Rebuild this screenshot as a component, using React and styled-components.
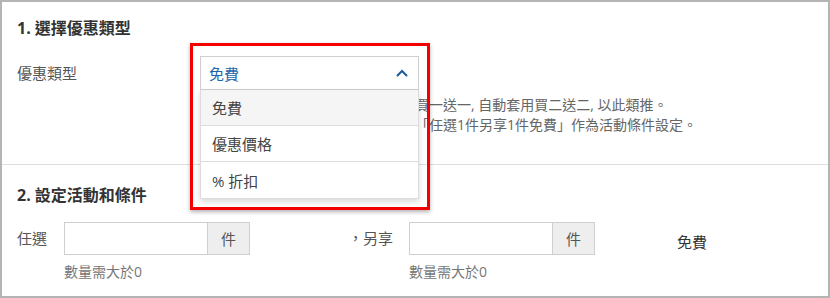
import styled, { createGlobalStyle } from 'styled-components'

const GlobalStyle = createGlobalStyle`
	body {
		margin: 0;
		font-family: "Open Sans", "Noto Sans CJK TC", sans-serif;
		color: #333;
	}
`

const options = ['免費', '優惠價格', '% 折扣']

export default function App() {
	return (
		<>
			<GlobalStyle />
			<Frame>
				<Section divider>
					<SectionTitle>1. 選擇優惠類型</SectionTitle>
					<FieldRow>
						<FieldLabel>優惠類型</FieldLabel>
						<div>
							<SelectWrap>
								<Annotation />
								<SelectBox>
									<SelectValue>免費</SelectValue>
									<Chevron viewBox="0 0 12 8">
										<polyline points="1.5,6.5 6,2 10.5,6.5" />
									</Chevron>
								</SelectBox>
								<OptionList>
									{options.map((opt, i) => (
										<OptionItem key={opt} active={i === 0}>
											{opt}
										</OptionItem>
									))}
								</OptionList>
							</SelectWrap>
							<Hint>
								符合條件即可獲得免費商品，設定買一送一, 自動套用買二送二, 以此類推。
								<br />
								若需設定其他商品組合方式，請以「任選1件另享1件免費」作為活動條件設定。
							</Hint>
						</div>
					</FieldRow>
				</Section>
				<Section>
					<SectionTitle>2. 設定活動和條件</SectionTitle>
					<ConditionRow>
						<RowLabel>任選</RowLabel>
						<div>
							<InputGroup>
								<TextInput />
								<Addon>件</Addon>
							</InputGroup>
							<HelpText>數量需大於0</HelpText>
						</div>
						<RowLabel align="end">，另享</RowLabel>
						<div>
							<InputGroup>
								<TextInput />
								<Addon>件</Addon>
							</InputGroup>
							<HelpText>數量需大於0</HelpText>
						</div>
						<Result>免費</Result>
					</ConditionRow>
				</Section>
			</Frame>
		</>
	)
}

const Frame = styled.div`
	width: 830px;
	height: 298px;
	box-sizing: border-box;
	border: 2px solid #b4b4b4;
	background: #fff;
	overflow: hidden;
`

const Section = styled.section`
	padding: ${({ divider }) => (divider ? '15px 15px 29px' : '19px 15px 0')};
	border-bottom: ${({ divider }) => (divider ? '1px solid #dedede' : 'none')};
`

const SectionTitle = styled.h3`
	margin: 0;
	font-size: 16px;
	line-height: 22px;
	font-weight: 700;
	color: #333;
`

const FieldRow = styled.div`
	display: grid;
	grid-template-columns: 183px 1fr;
	margin-top: 17px;
`

const FieldLabel = styled.div`
	font-size: 15px;
	line-height: 34px;
	color: #555;
`

const SelectWrap = styled.div`
	position: relative;
	width: 219px;
	z-index: 10;
`

const Annotation = styled.div`
	position: absolute;
	top: -13px;
	left: -10px;
	width: 240px;
	height: 167px;
	box-sizing: border-box;
	border: 3px solid #f40000;
	box-shadow: 0 2px 4px rgba(0, 0, 0, 0.3);
	pointer-events: none;
`

const SelectBox = styled.div`
	display: flex;
	align-items: center;
	justify-content: space-between;
	height: 34px;
	box-sizing: border-box;
	padding: 0 10px 0 8px;
	border: 1px solid #cfcfcf;
	background: #fff;
`

const SelectValue = styled.span`
	font-size: 15px;
	color: #2266aa;
`

const Chevron = styled.svg`
	width: 12px;
	height: 8px;
	fill: none;
	stroke: #1d5c9c;
	stroke-width: 2;
	stroke-linecap: round;
`

const OptionList = styled.ul`
	position: absolute;
	top: 100%;
	left: 0;
	right: 0;
	margin: 0;
	padding: 0;
	list-style: none;
	background: #fff;
	border: 1px solid #dcdcdc;
	border-top: none;
	box-shadow: 0 3px 6px rgba(0, 0, 0, 0.15);
`

const OptionItem = styled.li`
	height: 36px;
	box-sizing: border-box;
	padding: 0 11px;
	display: flex;
	align-items: center;
	font-size: 15px;
	color: #444;
	background: ${({ active }) => (active ? '#f5f5f5' : '#fff')};
	border-bottom: 1px solid #dcdcdc;

	&:last-child {
		border-bottom: none;
	}
`

const Hint = styled.p`
	margin: 5px 0 0 5px;
	font-size: 14px;
	line-height: 20px;
	color: #666;
	white-space: nowrap;
`

const ConditionRow = styled.div`
	display: grid;
	grid-template-columns: 47px 186px 159px 186px 1fr;
	margin-top: 16px;
`

const RowLabel = styled.div`
	font-size: 15px;
	line-height: 33px;
	color: #555;
	justify-self: ${({ align }) => align || 'start'};
	padding-right: ${({ align }) => (align === 'end' ? '16px' : '0')};
`

const InputGroup = styled.div`
	display: flex;
	height: 33px;
`

const TextInput = styled.input`
	width: 143px;
	height: 33px;
	box-sizing: border-box;
	border: 1px solid #cfcfcf;
	border-right: none;
	margin: 0;
	padding: 0 8px;
	outline: none;
`

const Addon = styled.span`
	width: 43px;
	box-sizing: border-box;
	display: flex;
	align-items: center;
	justify-content: center;
	border: 1px solid #cfcfcf;
	background: #eee;
	font-size: 15px;
	color: #555;
`

const HelpText = styled.div`
	margin-top: 7px;
	font-size: 14px;
	line-height: 20px;
	color: #777;
`

const Result = styled.div`
	padding-left: 82px;
	margin-top: 4px;
	font-size: 15px;
	line-height: 33px;
	color: #333;
`
